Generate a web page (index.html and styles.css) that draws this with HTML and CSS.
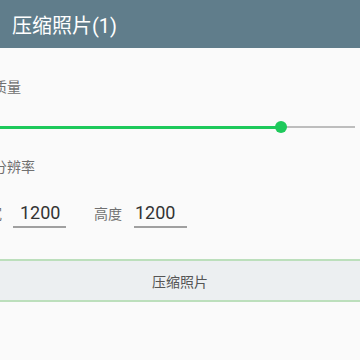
FILE: index.html
```html
<!DOCTYPE html>
<html>
<head>
<meta charset="utf-8">
<link rel="stylesheet" href="styles.css">
</head>
<body>
<div class="header">压缩照片(1)</div>
<div class="label label-quality">质量</div>
<div class="slider">
  <div class="fill"></div>
  <div class="thumb"></div>
  <div class="rest"></div>
</div>
<div class="label label-res">分辨率</div>
<div class="row">
  <span class="row-label">宽</span>
  <span class="input input-w">1200</span>
  <span class="row-label row-label-h">高度</span>
  <span class="input input-h">1200</span>
</div>
<div class="button">压缩照片</div>
</body>
</html>
```
FILE: styles.css
```css
html, body {
  margin: 0;
  padding: 0;
  background: #fafafa;
  width: 360px;
  height: 360px;
  overflow: hidden;
  font-family: Roboto, "Noto Sans CJK SC", sans-serif;
}
.header {
  height: 48px;
  background: #607d8b;
  color: #ffffff;
  font-size: 20px;
  display: flex;
  align-items: center;
  padding-left: 12px;
  padding-top: 1px;
  box-sizing: border-box;
}
.label {
  margin-left: -7px;
  font-size: 14px;
  line-height: 20px;
  color: #707070;
}
.label-quality {
  margin-top: 29px;
}
.label-res {
  margin-top: 20px;
}
.slider {
  margin-top: 20px;
  height: 20px;
  display: flex;
  align-items: center;
}
.fill {
  width: 281px;
  height: 3px;
  background: #1ec95b;
}
.thumb {
  width: 12px;
  height: 12px;
  border-radius: 50%;
  background: #1ec95b;
  margin-left: -6px;
  margin-right: -6px;
  position: relative;
  z-index: 1;
}
.rest {
  width: 74px;
  height: 2px;
  background: #bdbdbd;
}
.row {
  margin-top: 24px;
  margin-left: -12px;
  display: flex;
  align-items: baseline;
}
.row-label {
  font-size: 14px;
  color: #707070;
  margin-right: 11px;
}
.row-label-h {
  margin-left: 28px;
  margin-right: 12px;
}
.input {
  width: 53px;
  box-sizing: border-box;
  font-size: 18px;
  line-height: 24px;
  color: #333333;
  padding-bottom: 1px;
  border-bottom: 2px solid #a0a0a0;
}
.input-w {
  padding-left: 7px;
}
.input-h {
  padding-left: 1px;
}
.button {
  margin-top: 31px;
  height: 43px;
  box-sizing: border-box;
  background: #eceff1;
  border-top: 2px solid #bcdfbc;
  border-bottom: 2px solid #bcdfbc;
  display: flex;
  align-items: center;
  justify-content: center;
  font-size: 14px;
  color: #555555;
}
```
